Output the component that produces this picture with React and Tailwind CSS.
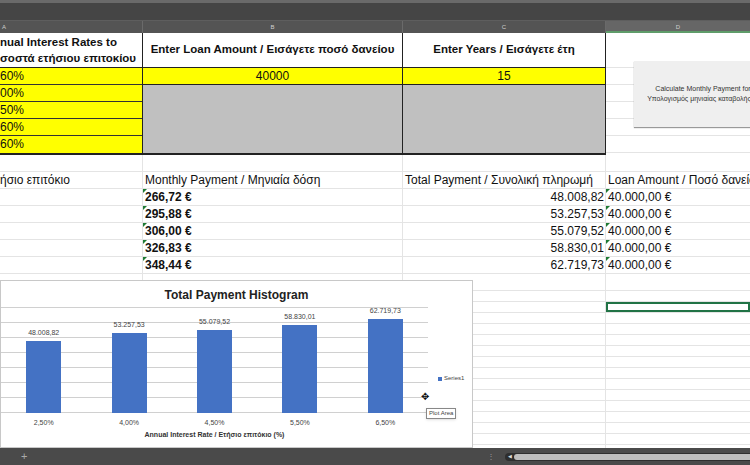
const font = { fontFamily: '"Liberation Sans", "Noto Sans", sans-serif' };

const rates = ['60%', '00%', '50%', '60%', '60%'];
const rows = [
  ['266,72 €', '48.008,82'],
  ['295,88 €', '53.257,53'],
  ['306,00 €', '55.079,52'],
  ['326,83 €', '58.830,01'],
  ['348,44 €', '62.719,73'],
];
const bars = [
  { x: '2,50%', v: '48.008,82', h: 72 },
  { x: '4,00%', v: '53.257,53', h: 80 },
  { x: '4,50%', v: '55.079,52', h: 83 },
  { x: '5,50%', v: '58.830,01', h: 88 },
  { x: '6,50%', v: '62.719,73', h: 94 },
];

const Tri = () => <span className="absolute left-0 top-0 h-0 w-0 border-t-[4px] border-r-[4px] border-t-[#1e7b34] border-r-transparent" />;

const Chart = () => (
  <div className="absolute left-0 top-[280px] h-[168px] w-[473px] border border-[#c8c8c8] bg-white">
    <div className="mt-[5px] text-center text-[12px] font-bold text-[#222]">Total Payment Histogram</div>
    <div className="relative ml-0 mt-[3px] h-[106px] w-[427px]">
      {[0, 1, 2, 3, 4, 5, 6, 7].map((i) => (
        <div key={i} className="absolute left-0 right-0 border-t border-[#d0d0d0]" style={{ top: i * 15 }} />
      ))}
      <div className="absolute inset-x-0 bottom-0 flex h-full items-end">
        {bars.map((b) => (
          <div key={b.x} className="flex flex-1 flex-col items-center">
            <span className="mb-[3px] text-[7px] text-[#444]">{b.v}</span>
            <div className="w-[35px] bg-[#4472c4]" style={{ height: b.h }} />
          </div>
        ))}
      </div>
    </div>
    <div className="flex w-[427px] pt-[5px]">
      {bars.map((b) => (
        <span key={b.x} className="flex-1 text-center text-[7px] text-[#444]">{b.x}</span>
      ))}
    </div>
    <div className="w-[427px] pt-[1px] text-center text-[7px] font-bold text-[#333]">Annual Interest Rate / Ετήσιο επιτόκιο (%)</div>
    <div className="absolute left-[437px] top-[93px] flex items-center gap-[2px] text-[6px] text-[#444]">
      <span className="h-[4px] w-[4px] bg-[#4472c4]" />Series1
    </div>
    <div className="absolute left-[420px] top-[111px] text-[10px] leading-none">✥</div>
    <div className="absolute left-[425px] top-[127px] border border-[#888] bg-white px-[2px] text-[6px] text-[#444] shadow">Plot Area</div>
  </div>
);

export default function App() {
  return (
    <div className="relative h-[465px] w-[750px] overflow-hidden bg-white text-[#111]" style={font}>
      <div className="h-[20px] border-t-[3px] border-[#6a6a6a] bg-[#454545]" />
      <div className="flex h-[13px] border-t border-[#5e5e5e] bg-[#545454] text-[6px] text-[#cfcfcf]">
        <div className="w-[143px] shrink-0 border-r border-[#6a6a6a] pl-[2px] leading-[12px]">A</div>
        <div className="w-[260px] shrink-0 border-r border-[#6a6a6a] text-center leading-[12px]">B</div>
        <div className="w-[203px] shrink-0 border-r border-[#6a6a6a] text-center leading-[12px]">C</div>
        <div className="flex-1 border-b-2 border-[#5f9c6a] bg-[#666] text-center leading-[12px]">D</div>
      </div>

      <div className="relative flex">
        <div className="flex w-[606px] shrink-0 border-b-2 border-[#222]">
          <div className="w-[143px] shrink-0 border-r border-[#222]">
            <div className="flex h-[35px] flex-col justify-center whitespace-nowrap border-b border-[#222] text-[11.5px] font-bold leading-[16px]">
              <span>nual Interest Rates to</span>
              <span>σοστά ετήσιου επιτοκίου</span>
            </div>
            {rates.map((r, i) => (
              <div key={i} className="h-[17px] border-b border-[#333] bg-[#ffff00] text-[12px] leading-[16px] last:border-b-0">{r}</div>
            ))}
          </div>
          <div className="w-[260px] shrink-0 border-r border-[#222]">
            <div className="flex h-[35px] items-center justify-center border-b border-[#222] text-[11.5px] font-bold">Enter Loan Amount / Εισάγετε ποσό δανείου</div>
            <div className="h-[17px] border-b border-[#222] bg-[#ffff00] text-center text-[12px] leading-[16px]">40000</div>
            <div className="h-[68px] bg-[#c0c0c0]" />
          </div>
          <div className="w-[203px] shrink-0 border-r border-[#222]">
            <div className="flex h-[35px] items-center justify-center border-b border-[#222] text-[11.5px] font-bold">Enter Years / Εισάγετε έτη</div>
            <div className="h-[17px] border-b border-[#222] bg-[#ffff00] text-center text-[12px] leading-[16px]">15</div>
            <div className="h-[68px] bg-[#c0c0c0]" />
          </div>
        </div>
        <div className="flex-1">
          <div className="h-[35px] border-b border-[#e4e4e4]" />
          {[0, 1, 2, 3, 4].map((i) => <div key={i} className="h-[17px] border-b border-[#e4e4e4]" />)}
        </div>
        <div className="absolute left-[634px] top-[28px] flex h-[66px] w-[130px] flex-col items-center justify-center bg-[#efefef] text-[7px] leading-[10px] text-[#333] shadow-[0_1px_1px_#999]">
          <span className="whitespace-nowrap pl-[8px]">Calculate Monthly Payment for</span>
          <span className="whitespace-nowrap">Υπολογισμός μηνιαίας καταβολής</span>
        </div>
      </div>

      <div className="flex flex-col">
        {[null, 'h', ...rows, null].map((r, i) => (
          <div key={i} className="flex h-[17px] border-b border-[#e4e4e4] text-[12px] leading-[16px]">
            <div className="w-[143px] shrink-0 border-r border-[#e4e4e4]">{r === 'h' ? 'ήσιο επιτόκιο' : ''}</div>
            <div className="relative w-[260px] shrink-0 border-r border-[#e4e4e4] pl-[2px] font-bold">
              {r === 'h' ? <span className="font-normal">Monthly Payment / Μηνιαία δόση</span> : r ? <><Tri />{r[0]}</> : ''}
            </div>
            <div className="w-[203px] shrink-0 border-r border-[#e4e4e4] pr-[1px] text-right">
              {r === 'h' ? <span className="block pl-[2px] text-left">Total Payment / Συνολική πληρωμή</span> : r ? r[1] : ''}
            </div>
            <div className="relative min-w-0 flex-1 overflow-hidden whitespace-nowrap pl-[2px]">
              {r === 'h' ? 'Loan Amount / Ποσό δανείου' : r ? <><Tri />40.000,00 €</> : ''}
            </div>
          </div>
        ))}
        {Array.from({ length: 15 }).map((_, i) => (
          <div key={i} className="flex h-[11px] border-b border-[#e4e4e4]">
            <div className="w-[143px] shrink-0 border-r border-[#e4e4e4]" />
            <div className="w-[260px] shrink-0 border-r border-[#e4e4e4]" />
            <div className="w-[203px] shrink-0 border-r border-[#e4e4e4]" />
            <div className={i === 1 ? 'flex-1 border-2 border-[#217346]' : 'flex-1'} />
          </div>
        ))}
      </div>

      <Chart />

      <div className="absolute bottom-0 left-0 flex h-[17px] w-full items-center bg-[#4a4a4a]">
        <span className="ml-[21px] text-[11px] text-[#aaa]">+</span>
        <span className="ml-[460px] text-[8px] text-[#999]">⋮</span>
        <div className="ml-[10px] flex h-[8px] flex-1 items-center rounded-l-full bg-[#2e2e2e] pl-[3px]">
          <span className="text-[5px] text-[#ddd]">◀</span>
          <div className="ml-[2px] h-[6px] flex-1 rounded-l-full bg-[#bdbdbd]" />
        </div>
      </div>
    </div>
  );
}
